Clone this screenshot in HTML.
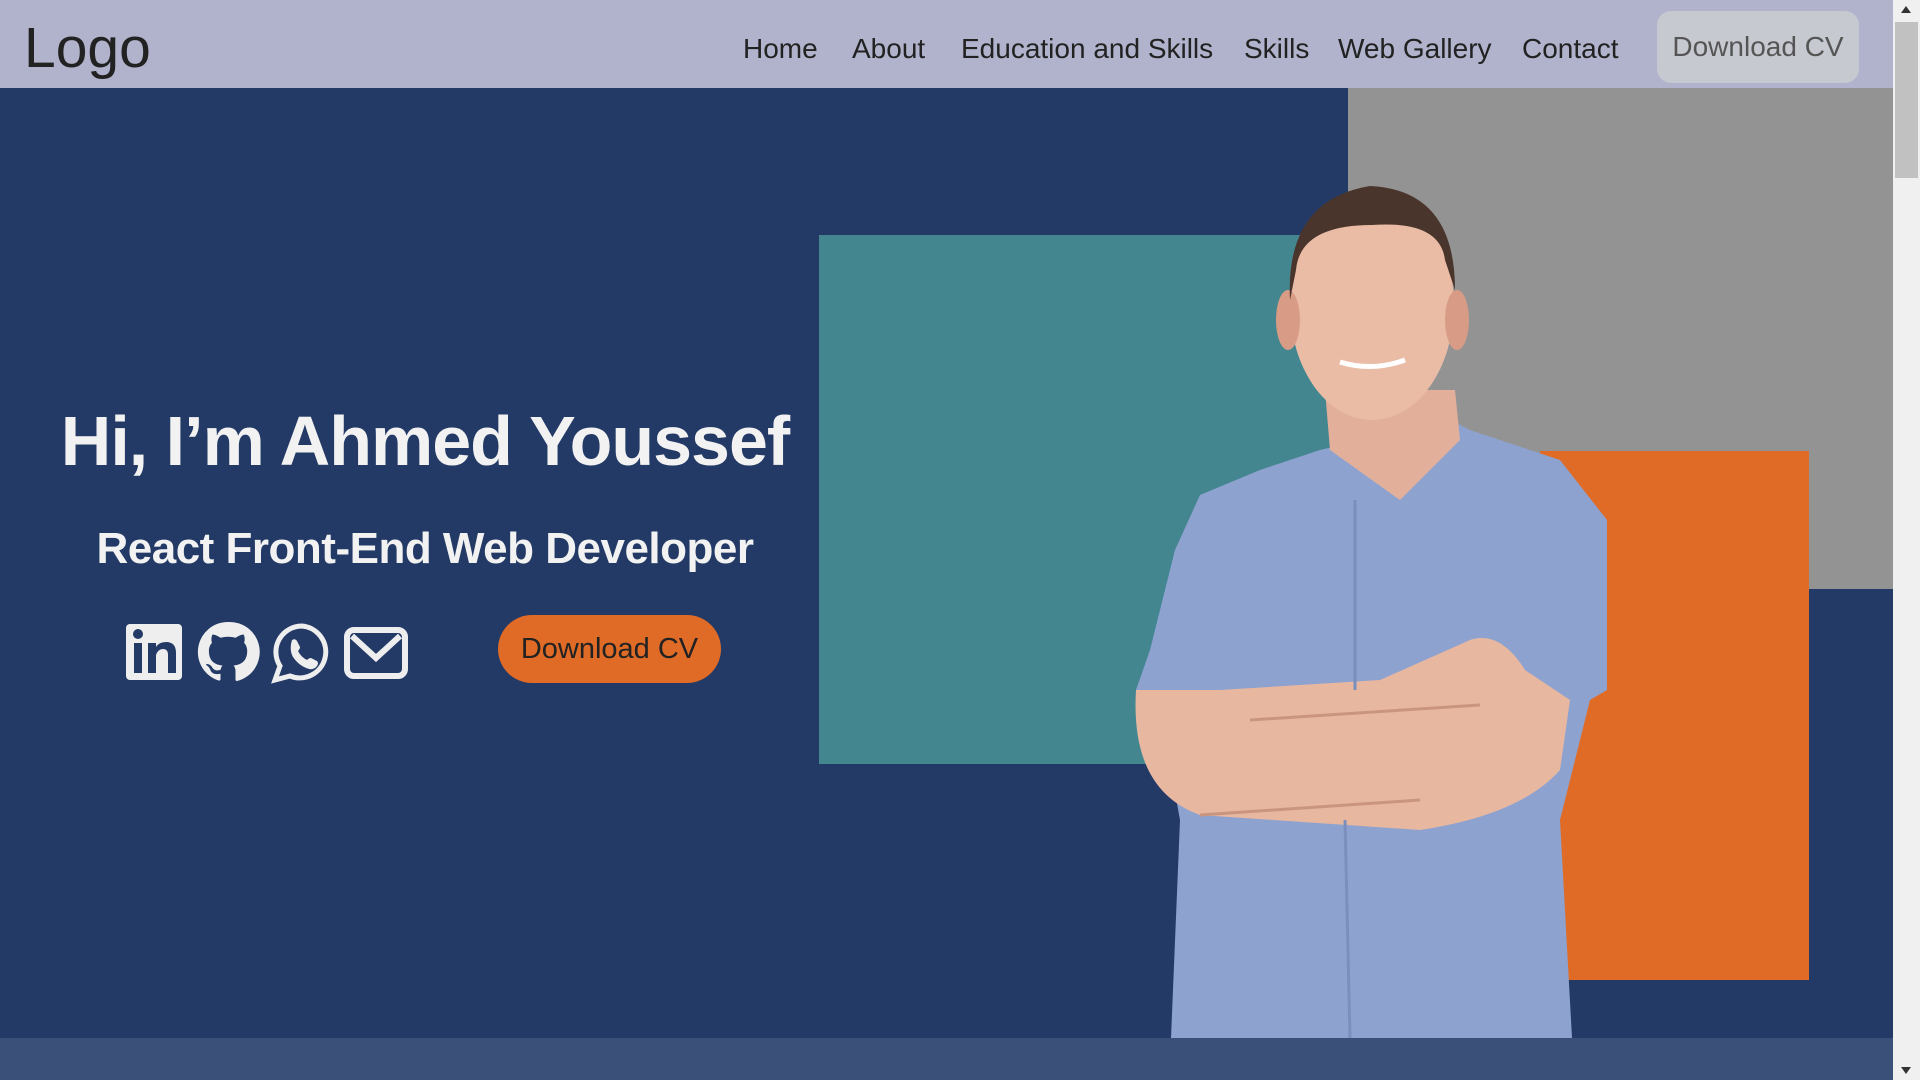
<!DOCTYPE html>
<html><head><meta charset="utf-8"><style>
*{margin:0;padding:0;box-sizing:border-box}
body{width:1920px;height:1080px;overflow:hidden;background:#233a66;font-family:"Segoe UI","Liberation Sans",sans-serif;position:relative}
.nav{position:absolute;left:0;top:0;width:1893px;height:88px;background:#b0b3cb}
.logo{position:absolute;left:24px;top:14px;font-size:57px;color:#222;line-height:1.2}
.links{position:absolute;top:32px;font-size:28px;color:#222;line-height:1.2}
.navbtn{position:absolute;left:1657px;top:11px;width:202px;height:72px;background:#c6c9d0;border-radius:14px;color:#555;font-size:28px;text-align:center;line-height:72px}
.sb{position:absolute;left:1893px;top:0;width:27px;height:1080px;background:#f0f0f0}
.sb .th{position:absolute;left:2px;top:22px;width:23px;height:156px;background:#c1c1c1}
.strip{position:absolute;left:0;top:1038px;width:1893px;height:42px;background:#3a5078}
h1{position:absolute;left:0;width:850px;top:401px;text-align:center;font-size:70px;font-weight:600;color:#f2f2f2;letter-spacing:-1px}
h2{position:absolute;left:0;width:850px;top:524px;text-align:center;font-size:44px;font-weight:600;color:#f2f2f2;letter-spacing:-0.5px}
.btn{position:absolute;left:498px;top:615px;width:223px;height:68px;background:#df6b27;border-radius:34px;color:#222;font-size:29px;text-align:center;line-height:68px}
</style></head><body>
<div class="nav">
<div class="logo">Logo</div>
<span class="links" style="left:743px">Home</span>
<span class="links" style="left:852px">About</span>
<span class="links" style="left:961px">Education and Skills</span>
<span class="links" style="left:1244px">Skills</span>
<span class="links" style="left:1338px">Web Gallery</span>
<span class="links" style="left:1522px">Contact</span>
<div class="navbtn">Download CV</div>
</div>
<div style="position:absolute;left:1348px;top:88px;width:545px;height:501px;background:#939393"></div>
<div style="position:absolute;left:819px;top:235px;width:529px;height:529px;background:#43868f"></div>
<div style="position:absolute;left:1540px;top:451px;width:269px;height:529px;background:#df6b27"></div>
<svg style="position:absolute;left:0;top:0" width="1893" height="1080">
<path d="M1320 450 L1260 470 L1200 495 L1175 550 L1150 650 L1136 690 L1160 710 L1180 820 L1171 1038 L1572 1038 L1560 820 L1590 700 L1607 690 L1607 520 L1560 460 L1470 430 L1450 420 Z" fill="#8ea2cf"/>
<path d="M1325 390 L1455 390 L1460 440 L1400 500 L1330 450 Z" fill="#e2b09a"/>
<ellipse cx="1372" cy="305" rx="82" ry="115" fill="#eabca6"/>
<ellipse cx="1288" cy="320" rx="12" ry="30" fill="#d89c86"/>
<ellipse cx="1457" cy="320" rx="12" ry="30" fill="#d89c86"/>
<path d="M1290 300 Q1285 200 1370 186 Q1455 190 1455 290 L1445 260 Q1440 220 1372 225 Q1300 225 1296 270 Z" fill="#4a352c"/>
<path d="M1340 362 Q1372 372 1405 360" stroke="#fff" stroke-width="5" fill="none"/>
<path d="M1136 690 Q1130 790 1200 815 L1420 830 Q1520 815 1560 770 L1570 700 L1525 670 Q1500 630 1470 640 L1380 680 L1220 690 Z" fill="#e8b7a0"/>
<path d="M1250 720 L1480 705" stroke="#c99580" stroke-width="3"/>
<path d="M1200 815 L1420 800" stroke="#c99580" stroke-width="3"/>
<path d="M1355 500 L1355 690 M1345 820 L1350 1038" stroke="#7a8fbd" stroke-width="3"/>
</svg>
<h1>Hi, I’m Ahmed Youssef</h1>
<h2>React Front-End Web Developer</h2>
<svg style="position:absolute;left:126px;top:620px" width="290" height="64" viewBox="0 0 290 64">
<g fill="#eee">
<rect x="0" y="4" width="56" height="56" rx="4"/>
<g fill="#233a66"><rect x="8" y="23" width="8" height="30"/><circle cx="12" cy="14" r="5"/>
<path d="M22 23h8v4q3-5 10-5q10 0 10 11v20h-8V35q0-6-5-6t-7 6v18h-8z"/></g>
</g>
<path transform="translate(71 1)" d="M31 1a30 30 0 0 0-9.5 58.5c1.5.3 2-.6 2-1.4v-5.3c-8.3 1.8-10-3.6-10-3.6-1.4-3.5-3.300-4.4-3.300-4.4-2.700-1.900.2-1.800.2-1.800 3 .2 4.600 3.100 4.600 3.100 2.700 4.600 7 3.300 8.700 2.500.3-1.900 1-3.300 1.900-4-6.700-.8-13.700-3.300-13.700-14.800 0-3.300 1.200-6 3.100-8.100-.3-.8-1.300-3.800.3-8 0 0 2.500-.8 8.300 3.100a28.600 28.600 0 0 1 15 0c5.700-3.900 8.200-3.100 8.200-3.100 1.600 4.100.6 7.200.3 8 1.900 2.100 3.100 4.800 3.100 8.100 0 11.500-7 14-13.700 14.800 1.100.9 2 2.800 2 5.600v8.300c0 .8.5 1.700 2.100 1.400A30 30 0 0 0 31 1z" fill="#eee"/>
<g transform="translate(147 4)">
<path d="M29 2a26 26 0 0 0-22 40L2 56l15-4A26 26 0 1 0 29 2z" fill="none" stroke="#eee" stroke-width="5"/>
<path d="M19 16q3-2 5 1l3 6q0 2-2 4q3 6 9 9q2-2 4-2l6 3q2 2 0 5q-3 4-8 3q-10-3-16-12q-4-7-1-17z" fill="#eee"/>
</g>
<rect x="221" y="10" width="58" height="46" rx="7" fill="none" stroke="#eee" stroke-width="6"/>
<path d="M226 16 L250 38 L274 16" fill="none" stroke="#eee" stroke-width="6"/>
</svg>
<div class="btn">Download CV</div>
<div class="strip"></div>
<div class="sb"><div class="th"></div>
<div style="position:absolute;left:8px;top:6px;border:5px solid transparent;border-bottom:7px solid #333;border-top:0"></div>
<div style="position:absolute;left:8px;bottom:6px;border:5px solid transparent;border-top:7px solid #333;border-bottom:0"></div></div>
</body></html>
